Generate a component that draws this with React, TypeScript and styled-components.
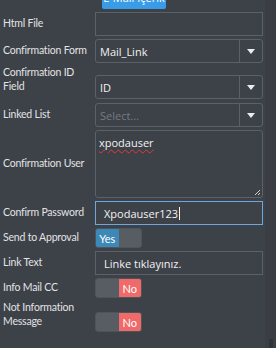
import styled, {createGlobalStyle} from "styled-components";

const GlobalStyle = createGlobalStyle`
    html, body {
        margin: 0;
        padding: 0;
        background: #3d4148;
        overflow: hidden;
    }

    body {
        font-family: Lato, "Open Sans", sans-serif;
        font-size: 10.5px;
        letter-spacing: -0.2px;
        color: #e2e3e5;
    }
`;

const Page = styled.div`
    display: flex;
    width: 276px;
    height: 348px;
    overflow: hidden;
`;

const Form = styled.div`
    flex: 1 1 auto;
    display: flex;
    flex-direction: column;
    gap: 3px;
    padding-left: 3px;
`;

const Scrollbar = styled.div`
    flex: 0 0 11px;
    display: flex;
    justify-content: center;
    align-items: flex-end;
    background: #3a3e44;
`;

const ScrollThumb = styled.div`
    width: 4px;
    height: 9px;
    background: #2f3237;
    border-radius: 1px;
`;

const TopButtonRow = styled.div`
    padding-left: 99px;
    margin-top: -13px;
`;

const TopButton = styled.button`
    height: 22px;
    width: 64px;
    border: none;
    border-radius: 0 0 2px 2px;
    background: #3a9be6;
    color: #fff;
    font: 11px "Open Sans", sans-serif;
    padding: 0;
    line-height: 22px;
    white-space: nowrap;
    overflow: hidden;
`;

const Row = styled.div<{ $twoLine?: boolean; $offset?: number }>`
    display: grid;
    grid-template-columns: 92px 168px;
    align-items: ${props => props.$twoLine ? "start" : "center"};

    & > *:nth-child(2) {
        margin-top: ${props => props.$offset ?? 0}px;
        margin-bottom: ${props => props.$twoLine ? 1 : 0}px;
    }
`;

const Label = styled.div`
    line-height: 13.5px;
    color: #e2e3e5;
`;

const Value = styled.span`
    font-family: "Open Sans", sans-serif;
    font-size: 11px;
    letter-spacing: 0;
`;

const TextBox = styled.div<{ $focused?: boolean; $pad?: number }>`
    box-sizing: border-box;
    height: 24px;
    display: flex;
    align-items: center;
    padding-left: ${props => props.$pad ?? 8}px;
    border: 1px solid ${props => props.$focused ? "#6ea8da" : "#5c6067"};
    color: #f2f2f2;
    white-space: nowrap;
`;

const Caret = styled.span`
    display: inline-block;
    width: 1px;
    height: 13px;
    margin-left: 1px;
    background: #f2f2f2;
`;

const SelectBox = styled.div`
    box-sizing: border-box;
    height: 24px;
    display: flex;
    border: 1px solid #5c6067;
    border-radius: 3px;
`;

const SelectValue = styled.div<{ $placeholder?: boolean }>`
    flex: 1 1 auto;
    display: flex;
    align-items: center;
    padding-left: 4px;
    color: ${props => props.$placeholder ? "#767a81" : "#f2f2f2"};
`;

const SelectArrow = styled.div`
    flex: 0 0 22px;
    display: flex;
    align-items: center;
    justify-content: center;
    border-left: 1px solid #5c6067;

    &::after {
        content: "";
        border-left: 4px solid transparent;
        border-right: 4px solid transparent;
        border-top: 5px solid #ececec;
        margin-top: 1px;
    }
`;

const TextArea = styled.div`
    box-sizing: border-box;
    position: relative;
    height: 68px;
    padding: 4px 3px;
    border: 1px solid #5c6067;
    border-radius: 3px;
    color: #f2f2f2;
`;

const Misspelled = styled(Value)`
    text-decoration: underline wavy #e23b3b;
    text-decoration-thickness: 1px;
    text-underline-offset: 2px;
`;

const Grip = styled.svg`
    position: absolute;
    right: 1px;
    bottom: 1px;
`;

const Toggle = styled.div`
    box-sizing: border-box;
    width: 47px;
    height: 20px;
    display: flex;
    border-radius: 3px;
    overflow: hidden;
    background: #585c63;
    border: 1px solid #4f535a;
`;

const ToggleHalf = styled.div<{ $tone?: "yes" | "no" }>`
    flex: 1 1 0;
    display: flex;
    align-items: center;
    justify-content: center;
    color: #fff;
    font-size: 11px;
    letter-spacing: 0;
    background: ${props => props.$tone === "yes" ? "#3c88b6" : props.$tone === "no" ? "#f16a6a" : "transparent"};
`;

function Select({value, placeholder}: { value?: string; placeholder?: string }) {
  return <SelectBox>
    <SelectValue $placeholder={!value}><Value>{value ?? placeholder}</Value></SelectValue>
    <SelectArrow/>
  </SelectBox>
}

function Switch({on}: { on: boolean }) {
  return <Toggle>
    {on ? <><ToggleHalf $tone="yes">Yes</ToggleHalf><ToggleHalf/></>
        : <><ToggleHalf/><ToggleHalf $tone="no">No</ToggleHalf></>}
  </Toggle>
}

export default function App() {
  return <Page>
    <GlobalStyle/>
    <Form>
      <TopButtonRow>
        <TopButton>E-Mail İçerik</TopButton>
      </TopButtonRow>

      <Row>
        <Label>Html File</Label>
        <TextBox/>
      </Row>

      <Row>
        <Label>Confirmation Form</Label>
        <Select value="Mail_Link"/>
      </Row>

      <Row $twoLine $offset={9}>
        <Label>Confirmation ID Field</Label>
        <Select value="ID"/>
      </Row>

      <Row>
        <Label>Linked List</Label>
        <Select placeholder="Select..."/>
      </Row>

      <Row>
        <Label>Confirmation User</Label>
        <TextArea>
          <Misspelled>xpodauser</Misspelled>
          <Grip width="7" height="7" viewBox="0 0 7 7">
            <path d="M6 1 L1 6 M6 4 L4 6" stroke="#d0d0d0" strokeWidth="1"/>
          </Grip>
        </TextArea>
      </Row>

      <Row>
        <Label>Confirm Password</Label>
        <TextBox $focused><Value>Xpodauser123</Value><Caret/></TextBox>
      </Row>

      <Row>
        <Label>Send to Approval</Label>
        <Switch on/>
      </Row>

      <Row>
        <Label>Link Text</Label>
        <TextBox><Value>Linke tıklayınız.</Value></TextBox>
      </Row>

      <Row>
        <Label>Info Mail CC</Label>
        <Switch on={false}/>
      </Row>

      <Row $twoLine $offset={11}>
        <Label>Not Information Message</Label>
        <Switch on={false}/>
      </Row>
    </Form>
    <Scrollbar>
      <ScrollThumb/>
    </Scrollbar>
  </Page>
}
